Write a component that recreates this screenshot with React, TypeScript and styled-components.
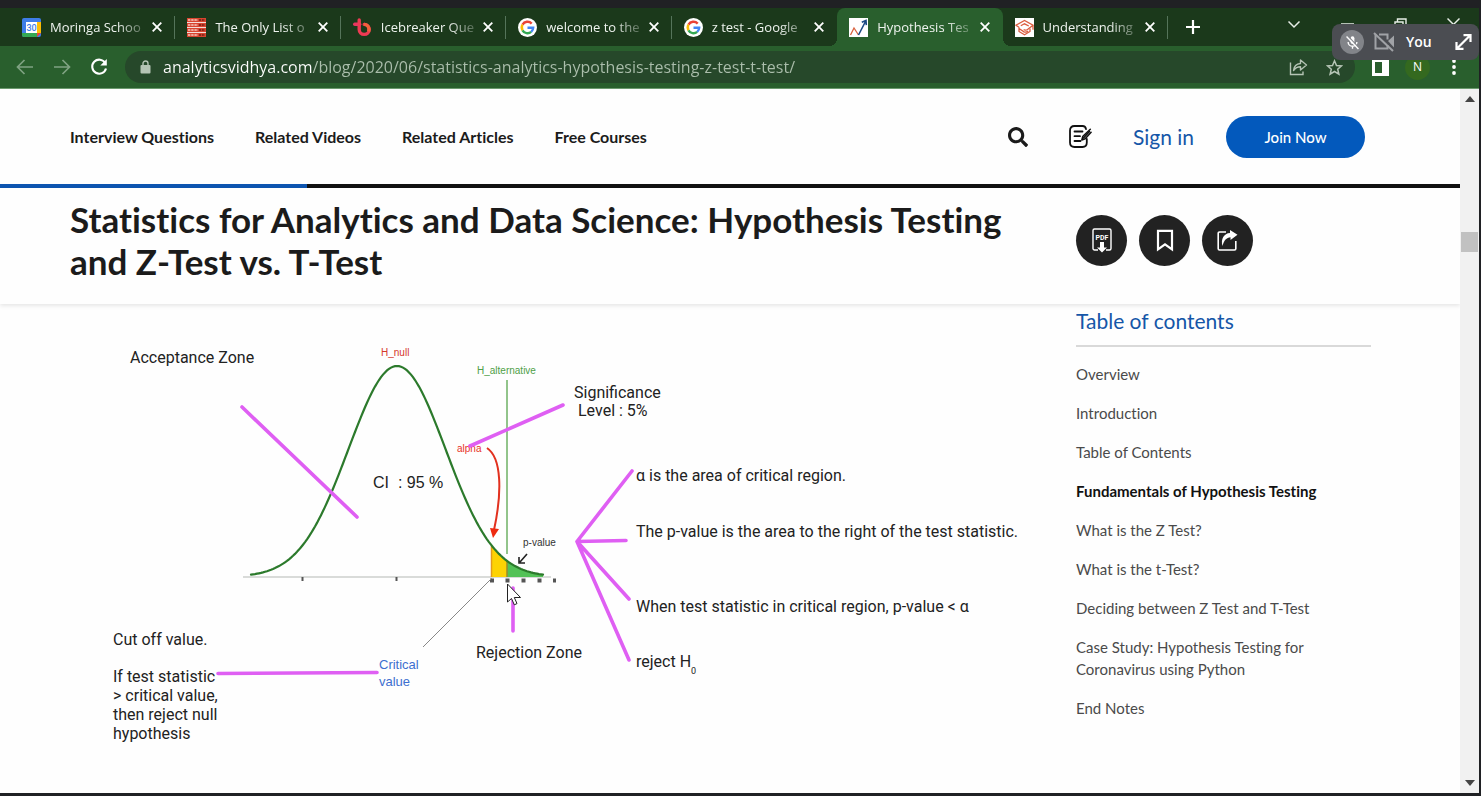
import React from "react";
import styled, { createGlobalStyle, css } from "styled-components";
import { FaSearch } from "react-icons/fa";

const chromeFont = `"Open Sans", "Noto Sans", sans-serif`;
const siteFont = `Lato, "Open Sans", sans-serif`;

const GlobalStyle = createGlobalStyle`
  *, *::before, *::after { box-sizing: border-box; font-variant-ligatures: none; }
  body { margin: 0; background: #202124; font-family: ${siteFont}; }
  button { font: inherit; color: inherit; background: none; border: 0; padding: 0; cursor: pointer; }
  a { color: inherit; text-decoration: none; }
  h1, h2, ul { margin: 0; padding: 0; }
  svg { display: block; flex: none; }
`;

/* ---------- browser window ---------- */

const Window = styled.div`
  display: flex;
  flex-direction: column;
  min-height: 100vh;
  padding: 8px 2px 3px 0;
  background: #202124;
`;

const TabStrip = styled.div`
  position: relative;
  display: flex;
  height: 38px;
  padding-left: 10px;
  background: #1b391b;
`;

const Tabs = styled.div`
  flex: 0 1 1158px;
  display: grid;
  grid-template-columns: repeat(7, minmax(0, 1fr));
`;

const Tab = styled.div<{ $active?: boolean; $divider?: boolean }>`
  position: relative;
  display: flex;
  align-items: center;
  gap: 9px;
  padding: 0 13px 0 12px;
  color: #eef3ee;
  font: 13px/20px ${chromeFont};

  ${(p) =>
    p.$divider &&
    css`
      &::after {
        content: "";
        position: absolute;
        right: 0;
        top: 8px;
        width: 1px;
        height: 23px;
        background: #55745a;
      }
    `}

  ${(p) =>
    p.$active &&
    css`
      background: #295f2d;
      border-radius: 8px 8px 0 0;
      &::before,
      &::after {
        content: "";
        position: absolute;
        bottom: 0;
        width: 8px;
        height: 8px;
      }
      &::before {
        left: -8px;
        background: radial-gradient(circle at 0 0, transparent 8px, #295f2d 8px);
      }
      &::after {
        right: -8px;
        background: radial-gradient(circle at 100% 0, transparent 8px, #295f2d 8px);
      }
    `}
`;

const TabLabel = styled.span`
  flex: 1;
  min-width: 0;
  white-space: nowrap;
  mask-image: linear-gradient(90deg, #000 72%, #0004 100%);
`;

const TabClose = styled.button`
  display: flex;
  color: #fff;
`;

const NewTab = styled.button`
  display: flex;
  align-items: center;
  margin-left: 18px;
  color: #fff;
`;

const WindowControls = styled.div`
  display: flex;
  align-items: flex-start;
  gap: 40px;
  margin-left: auto;
  padding: 9px 19px 0 0;
  color: #e8eee8;

  button { display: flex; }
`;

const Toolbar = styled.div`
  display: flex;
  align-items: center;
  height: 43px;
  padding: 0 17px 0 16px;
  background: #295f2d;
  border-bottom: 1px solid #6b9a6e;
  color: #fff;
`;

const NavButtons = styled.div`
  display: flex;
  gap: 19px;
  margin-right: 17px;
`;

const NavButton = styled.button<{ $dim?: boolean }>`
  display: flex;
  color: ${(p) => (p.$dim ? "#7fa282" : "#fff")};
`;

const AddressBar = styled.div`
  flex: 1;
  display: flex;
  align-items: center;
  gap: 12px;
  height: 32px;
  padding: 0 12px 0 15px;
  border-radius: 16px;
  background: #26482a;
  color: #b5c4b5;

  button { display: flex; }
`;

const AddressInput = styled.input`
  flex: 1;
  min-width: 0;
  border: 0;
  outline: 0;
  padding: 0;
  font: 16px/24px ${chromeFont};
  color: transparent;
  background: linear-gradient(90deg, #fff 149px, #abbeac 149px);
  background-clip: text;
`;

const AddressActions = styled.div`
  display: flex;
  align-items: center;
  gap: 18px;
`;

const ToolbarActions = styled.div`
  display: flex;
  align-items: center;
  gap: 16px;
  margin-left: 17px;

  button { display: flex; }
`;

const Avatar = styled.button`
  align-items: center;
  justify-content: center;
  width: 25px;
  height: 25px;
  border-radius: 50%;
  background: #34691f;
  font: 12px/16px ${chromeFont};
`;

const MenuButton = styled.button`
  padding: 0 6px;
`;

/* ---------- call overlay ---------- */

const CallOverlay = styled.div`
  position: absolute;
  z-index: 2;
  right: 0;
  top: 16px;
  display: flex;
  align-items: center;
  width: 147px;
  height: 36px;
  padding: 0 7px 0 8px;
  border-radius: 8px;
  background: #4b4d52;
  color: #fff;

  button { display: flex; margin-left: auto; }
`;

const MutedBadge = styled.span`
  display: flex;
  align-items: center;
  justify-content: center;
  width: 24px;
  height: 24px;
  margin-right: 9px;
  border-radius: 50%;
  background: #828489;
`;

const CallName = styled.span`
  margin-left: 11px;
  font: 600 14px/20px ${chromeFont};
`;

/* ---------- page ---------- */

const Viewport = styled.div`
  flex: 1;
  display: flex;
  background: #fefefe;
`;

const Page = styled.div`
  flex: 1;
  min-width: 0;
  color: #1b1b1b;
`;

const SiteHeader = styled.header`
  display: flex;
  align-items: center;
  justify-content: space-between;
  height: 95px;
  padding: 0 95px 0 70px;
`;

const SiteNav = styled.nav`
  display: flex;
  gap: 41px;
  font: 700 16px/24px ${siteFont};
`;

const HeaderActions = styled.div`
  display: flex;
  align-items: center;

  > button { display: flex; }
`;

const WriteLink = styled.a`
  margin-left: 41px;
`;

const SignIn = styled.a`
  margin: 0 32px 0 41px;
  color: #1556a8;
  font-size: 21px;
  line-height: 28px;
`;

const JoinButton = styled.button`
  justify-content: center;
  width: 139px;
  border-radius: 21px;
  background: #0359bc;
  color: #fff;
  font: 500 15px/42px ${siteFont};
`;

const ReadProgress = styled.div`
  height: 4px;
  background: linear-gradient(90deg, #0d55b0 21%, #111 21%);
`;

const TitleBar = styled.div`
  display: grid;
  grid-template-columns: minmax(0, 1fr) 295px;
  gap: 30px;
  align-items: center;
  padding: 10px 89px 22px 70px;
  box-shadow: 0 2px 4px #00000018;
`;

const Title = styled.h1`
  font: 700 35px/42px ${siteFont};
  font-variant-ligatures: none;
`;

const TitleActions = styled.div`
  display: flex;
  gap: 12px;
`;

const RoundButton = styled.button`
  display: flex;
  align-items: center;
  justify-content: center;
  width: 51px;
  height: 51px;
  border-radius: 50%;
  background: #222;
  color: #fff;
`;

const Columns = styled.div`
  display: grid;
  grid-template-columns: minmax(0, 1fr) 295px;
  gap: 30px;
  padding: 0 89px 0 70px;
`;

const Figure = styled.figure`
  margin: 0;

  svg { width: 100%; max-width: 976px; height: auto; }
`;

const Toc = styled.aside`
  padding-top: 3px;
`;

const TocHeading = styled.h2`
  padding-bottom: 10px;
  border-bottom: 2px solid #d9d9d9;
  color: #1556a8;
  font: 400 21px/28px ${siteFont};
`;

const TocList = styled.ul`
  display: flex;
  flex-direction: column;
  gap: 17px;
  padding-top: 16px;
  list-style: none;
  font-size: 15px;
  line-height: 22px;
  color: #4a4a4a;
`;

const TocItem = styled.li<{ $current?: boolean }>`
  ${(p) => p.$current && css`color: #111; font-weight: 700;`}
`;

/* ---------- page scrollbar ---------- */

const ScrollTrack = styled.div`
  display: flex;
  flex-direction: column;
  align-items: center;
  width: 19px;
  background: #f1f1f1;

  button { display: flex; padding: 7px 0; }
`;

const ScrollSpace = styled.div<{ $share: number }>`
  flex: ${(p) => p.$share} 0 0;
`;

const ScrollThumb = styled.div`
  width: 17px;
  height: 20px;
  background: #c1c1c1;
`;

/* ---------- icons ---------- */

const Close = () => (
  <svg width="10" height="10" viewBox="0 0 10 10" stroke="currentColor" strokeWidth="1.8">
    <path d="M.7.7l8.6 8.6M9.3.7L.7 9.3" />
  </svg>
);

const CalendarIcon = () => (
  <svg width="19" height="19" viewBox="0 0 19 19">
    <rect width="19" height="19" rx="2" fill="#3f7de8" />
    <path d="M15 4h4v11h-4z" fill="#fbbc04" />
    <path d="M0 15h15v4H2a2 2 0 0 1-2-2z" fill="#34a853" />
    <path d="M15 15h4l-4 4z" fill="#ea4335" />
    <path d="M4 4h11v11H4z" fill="#fff" />
    <text x="9.5" y="12.8" textAnchor="middle" fontFamily="Roboto, sans-serif" fontSize="9" fontWeight="500" fill="#3f7de8">30</text>
  </svg>
);

const ListIcon = () => (
  <svg width="19" height="19" viewBox="0 0 19 19">
    <rect width="19" height="19" fill="#f3ded8" />
    {[0, 5, 10, 15].map((y) => (
      <g key={y}>
        <rect y={y} width="19" height="4" fill="#d8452f" />
        <path d={`M1 ${y + 2}h10`} stroke="#f6c7bd" strokeWidth="1.4" strokeDasharray="2.4 .8" />
        <path d={`M12 ${y + 2}h6`} stroke="#6d1f17" strokeWidth="1.6" strokeDasharray="2 .8" />
      </g>
    ))}
  </svg>
);

const TeamIcon = () => (
  <svg width="19" height="19" viewBox="0 0 19 19" fill="none" strokeWidth="3.4">
    <path d="M1.700 6.200h5" stroke="#e8365f" strokeLinecap="round" />
    <path d="M6.200 2v9.400a5 5 0 1 0 5-5" stroke="#ee3a53" strokeLinecap="round" />
    <path d="M11 6.400a5 5 0 0 1 4.600 7" stroke="#f2603c" />
  </svg>
);

const GoogleIcon = () => (
  <svg width="19" height="19" viewBox="0 0 19 19">
    <circle cx="9.5" cy="9.5" r="9.5" fill="#fff" />
    <g fill="none" strokeWidth="2.4">
      <path d="M13.7 5.6A5.7 5.7 0 0 0 4.5 6.7" stroke="#ea4335" />
      <path d="M4.5 6.7a5.7 5.7 0 0 0 0 5.6" stroke="#fbbc05" />
      <path d="M4.5 12.3a5.7 5.7 0 0 0 8.7 1.5" stroke="#34a853" />
      <path d="M13.2 13.8a5.7 5.7 0 0 0 2-4.1H9.5" stroke="#4285f4" />
    </g>
  </svg>
);

const VidhyaIcon = () => (
  <svg width="19" height="19" viewBox="0 0 19 19" fill="none">
    <rect width="19" height="19" fill="#fff" />
    <path d="M1.5 17L5 10l4.5 7" stroke="#d9623f" strokeWidth="1.3" />
    <path d="M9.500 17L16.500 3.500M12.800 4.200l4.200-1.700.3 4.600" stroke="#1c4a85" strokeWidth="1.6" />
  </svg>
);

const ScholarIcon = () => (
  <svg width="19" height="19" viewBox="0 0 19 19" fill="none" stroke="#db5d3f" strokeWidth="1.3">
    <rect width="19" height="19" fill="#fff" stroke="none" />
    <path d="M4 9.300L1 7.200l8.500-4.700L18 7.200l-5.500 4.300c-1.500 1.100-3 .8-3.700-.2M18 7.200v4.500M5.800 7.800l3.700-2 4.300 2.200" />
    <path d="M4 9.300v4.200l5.500 3.300 5.500-3.300v-3M4 10.500l5 3.300c1.500.6 3 0 4-.9" />
  </svg>
);

const BackArrow = ({ flip }: { flip?: boolean }) => (
  <svg width="18" height="18" viewBox="0 0 18 18" fill="none" stroke="currentColor" strokeWidth="1.7">
    <path d={flip ? "M1 9h15M9.500 2l7 7-7 7" : "M17 9H2M8.500 2l-7 7 7 7"} />
  </svg>
);

const ReloadIcon = () => (
  <svg width="18" height="18" viewBox="0 0 18 18" fill="none" stroke="currentColor" strokeWidth="2.1">
    <path d="M15.200 5A7 7 0 1 0 16 10.500" />
    <path d="M16.800 1v6.500h-6.500z" fill="currentColor" stroke="none" />
  </svg>
);

const LockIcon = () => (
  <svg width="11" height="14" viewBox="0 0 11 14">
    <rect x=".5" y="5" width="10" height="8.500" rx="1" fill="currentColor" />
    <path d="M3 6V3.500a2.500 2.500 0 0 1 5 0V6" fill="none" stroke="currentColor" strokeWidth="1.4" />
  </svg>
);

const SharePageIcon = () => (
  <svg width="19" height="18" viewBox="0 0 19 18" fill="none" stroke="currentColor" strokeWidth="1.4">
    <path d="M1.500 4.500v12h12.500v-3" />
    <path d="M4.500 12.500c.5-4.500 3-6.700 7-7V2l6 5-6 5V8.800c-3 0-5.200 1.200-7 3.700z" strokeLinejoin="round" />
  </svg>
);

const StarIcon = () => (
  <svg width="17" height="17" viewBox="0 0 17 17" fill="none" stroke="currentColor" strokeWidth="1.5">
    <path d="M8.500 1.800l2 4.700 5 .4-3.800 3.300 1.200 5-4.400-2.700-4.400 2.700 1.200-5L1.500 6.900l5-.4z" />
  </svg>
);

const SidePanelIcon = () => (
  <svg width="17" height="17" viewBox="0 0 17 17">
    <path d="M0 0h17v17H0zM3 3v11h7V3z" fill="currentColor" fillRule="evenodd" />
  </svg>
);

const KebabIcon = () => (
  <svg width="4" height="16" viewBox="0 0 4 16" fill="currentColor">
    <circle cx="2" cy="2" r="1.900" />
    <circle cx="2" cy="8" r="1.900" />
    <circle cx="2" cy="14" r="1.900" />
  </svg>
);

const MicOffIcon = () => (
  <svg width="15" height="15" viewBox="0 0 24 24" fill="none" stroke="#fff" strokeWidth="2.200">
    <rect x="9" y="2" width="6" height="12" rx="3" fill="#fff" stroke="none" />
    <path d="M5 11a7 7 0 0 0 14 0M12 18v4" />
    <path d="M4.500 1.500l18 19" stroke="#828489" strokeWidth="2" />
    <path d="M2.500 2.500l19 20" />
  </svg>
);

const CameraOffIcon = () => (
  <svg width="22" height="20" viewBox="0 0 22 20" fill="none" stroke="#a0a2a6" strokeWidth="2">
    <path d="M6 2.500h8.500v5M14.500 13v3.500H2.500V2.500" />
    <path d="M15 9l6-5.500v12z" fill="#a0a2a6" stroke="none" />
    <path d="M1 1l19 18" />
  </svg>
);

const ExpandIcon = () => (
  <svg width="17" height="16" viewBox="0 0 17 16" fill="none" stroke="#fff" strokeWidth="2.200">
    <path d="M2 14.500L15 1.500M8.500 1.200H15.500V8M1.500 8v6.800H8.500" />
  </svg>
);

const WriteIcon = () => (
  <svg width="23" height="23" viewBox="0 0 23 23" fill="none" stroke="#111" strokeWidth="1.800" strokeLinecap="round">
    <path d="M17 4.200C16.700 2 15.500 1 13.500 1h-8C2.500 1 1 2.500 1 5.500v12C1 20.500 2.500 22 5.500 22h8c3 0 4.300-1.500 4.300-4.500V14" />
    <path d="M5.500 6.500h8M5.500 11.200h5.500M5.500 16h6" />
    <path d="M12.800 15l1-3.500 7.500-7.200M12.800 15l3.300-1.200 6-6.500" strokeWidth="1.500" />
    <path d="M14.500 13l6-6.500" strokeWidth="1.600" />
  </svg>
);

const PdfIcon = () => (
  <svg width="20" height="25" viewBox="0 0 20 25" fill="none" stroke="#fff" strokeWidth="1.400">
    <path d="M6 22H2.500A1.500 1.500 0 0 1 1 20.500V2.500A1.500 1.500 0 0 1 2.500 1h15A1.500 1.500 0 0 1 19 2.500v18a1.500 1.500 0 0 1-1.500 1.500H14" />
    <text x="10" y="11.500" textAnchor="middle" fontFamily="Roboto, sans-serif" fontSize="7" fontWeight="700" fill="#fff" stroke="none">PDF</text>
    <path d="M8 14h4v5.500h3L10 24.500 5 19.500h3z" fill="#fff" stroke="none" />
  </svg>
);

const BookmarkIcon = () => (
  <svg width="18" height="23" viewBox="0 0 18 23" fill="none" stroke="#fff" strokeWidth="2.200">
    <path d="M2 1.800h14v18.500l-7-5-7 5z" />
  </svg>
);

const ShareIcon = () => (
  <svg width="21" height="21" viewBox="0 0 21 21" fill="none" stroke="#fff" strokeWidth="1.600">
    <path d="M9 2H2.500C1.600 2 1.200 2.400 1.200 3.200v15.600c0 .8.400 1.200 1.300 1.200h15c.9 0 1.300-.4 1.300-1.200V11" />
    <path d="M13 0l7.500 4.800-7 5.200V7.300C9.500 7.500 7 10.500 5.500 16 3.500 9 7 3.300 13 3z" fill="#fff" stroke="none" />
  </svg>
);

/* ---------- hypothesis test diagram ---------- */

const MEAN = 397;
const SIGMA = 48.5;
const BASELINE = 577;
const PEAK = 211;

const curve = (from: number, to: number) => {
  const points: string[] = [];
  for (let x = from; x <= to; x += 2) {
    const y = BASELINE - PEAK * Math.exp(-((x - MEAN) ** 2) / (2 * SIGMA ** 2));
    points.push(`${x},${y.toFixed(1)}`);
  }
  return points.join(" ");
};

const Note = styled.text`
  font: 16px Roboto, sans-serif;
  fill: #222;
`;

const SmallNote = styled.text<{ $tone: string }>`
  font: 10px "Liberation Sans", sans-serif;
  fill: ${(p) => p.$tone};
`;

const IntervalNote = styled.text`
  font: 16px "Liberation Sans", sans-serif;
  fill: #222;
`;

const CriticalNote = styled.text`
  font: 13px "Liberation Sans", sans-serif;
  fill: #3d6fd0;
`;

const Diagram = () => (
  <svg viewBox="70 304 976 480" role="img" aria-label="Acceptance and rejection zones of a hypothesis test">
    <path d="M243 577H551" stroke="#b4b8b4" strokeWidth="1.200" />
    <polygon points={`491,577 ${curve(491, 507)} 507,577`} fill="#fdd303" />
    <polygon points={`507,577 ${curve(507, 543)} 543,577`} fill="#53c257" />
    <path d="M491.500 546v31" stroke="#e39a1c" strokeWidth="1.500" />
    <path d="M507 560v17" stroke="#9a8a2a" strokeWidth="1.500" />
    <path d="M507 380V554" stroke="#92c48b" strokeWidth="2" />
    <polyline points={curve(251, 543)} fill="none" stroke="#2c7a2c" strokeWidth="2.200" strokeLinecap="round" />
    <path d="M302.500 577v4M396.500 577v4" stroke="#555" strokeWidth="2" />
    <path d="M490 580.500h4M505.500 580.500h4M521.500 580.500h4M537.500 580.500h4M553 580.500h3" stroke="#555" strokeWidth="4" />
    <path d="M492 578L423 647" stroke="#888" strokeWidth="1" />

    <path d="M487 448c15 10 15 45 7 82" fill="none" stroke="#e2311f" strokeWidth="2" />
    <path d="M490 528l9 1-6 9z" fill="#ee2a10" />
    <path d="M527 554l-7 8M519 557v6h6" fill="none" stroke="#222" strokeWidth="1.600" />

    <SmallNote x="381" y="356" $tone="#d5382b">H_null</SmallNote>
    <SmallNote x="477" y="374" $tone="#4f9f48">H_alternative</SmallNote>
    <SmallNote x="457" y="452" $tone="#e8321f">alpha</SmallNote>
    <SmallNote x="523" y="546" $tone="#333">p-value</SmallNote>

    <g stroke="#df5ff3" strokeWidth="3.600" strokeLinecap="round" strokeLinejoin="round" fill="none">
      <path d="M242 407L357 517M470 446L563 405" />
      <path d="M632 471L577 541.500L626 540.500M629 599L577 541.500L629 660" />
      <path d="M513 588V631M218 673.500L377 672.500" />
    </g>

    <Note x="130" y="363">Acceptance Zone</Note>
    <IntervalNote x="373" y="488">CI&nbsp; : 95 %</IntervalNote>
    <Note x="574" y="398">Significance</Note>
    <Note x="578" y="416">Level : 5%</Note>
    <Note x="636" y="481">α is the area of critical region.</Note>
    <Note x="636" y="537">The p-value is the area to the right of the test statistic.</Note>
    <Note x="636" y="612">When test statistic in critical region, p-value &lt; α</Note>
    <Note x="636" y="667">
      reject H<tspan dy="7" fontSize="9">0</tspan>
    </Note>
    <Note x="476" y="658">Rejection Zone</Note>
    <Note x="113" y="645">Cut off value.</Note>
    <Note x="113" y="682">If test statistic</Note>
    <Note x="113" y="701">&gt; critical value,</Note>
    <Note x="113" y="720">then reject null</Note>
    <Note x="113" y="739">hypothesis</Note>
    <CriticalNote x="379" y="669">Critical</CriticalNote>
    <CriticalNote x="379" y="686">value</CriticalNote>

    <path d="M507.500 584v18l4-3.500 2.800 6.300 2.700-1.200-2.700-6.100h6.200z" fill="#fff" stroke="#222" strokeWidth="1" />
  </svg>
);

/* ---------- data ---------- */

const tabs = [
  { label: "Moringa Schoo", icon: <CalendarIcon />, divider: true },
  { label: "The Only List o", icon: <ListIcon />, divider: true },
  { label: "Icebreaker Que", icon: <TeamIcon />, divider: true },
  { label: "welcome to the", icon: <GoogleIcon />, divider: true },
  { label: "z test - Google", icon: <GoogleIcon /> },
  { label: "Hypothesis Tes", icon: <VidhyaIcon />, active: true },
  { label: "Understanding", icon: <ScholarIcon />, divider: true },
];

const navLinks = ["Interview Questions", "Related Videos", "Related Articles", "Free Courses"];

const tocItems = [
  "Overview",
  "Introduction",
  "Table of Contents",
  "Fundamentals of Hypothesis Testing",
  "What is the Z Test?",
  "What is the t-Test?",
  "Deciding between Z Test and T-Test",
  "Case Study: Hypothesis Testing for Coronavirus using Python",
  "End Notes",
];

export default function App() {
  return (
    <Window>
      <GlobalStyle />
      <TabStrip>
        <Tabs>
          {tabs.map((t) => (
            <Tab key={t.label} $active={t.active} $divider={t.divider}>
              {t.icon}
              <TabLabel>{t.label}</TabLabel>
              <TabClose aria-label={`Close ${t.label}`}><Close /></TabClose>
            </Tab>
          ))}
        </Tabs>
        <NewTab aria-label="New tab">
          <svg width="14" height="14" viewBox="0 0 14 14" stroke="currentColor" strokeWidth="2.200">
            <path d="M7 0v14M0 7h14" />
          </svg>
        </NewTab>
        <WindowControls>
          <button aria-label="Search tabs">
            <svg width="14" height="14" viewBox="0 0 14 14" fill="none" stroke="currentColor" strokeWidth="1.500">
              <path d="M1.500 4.500L7 10l5.500-5.500" />
            </svg>
          </button>
          <button aria-label="Minimize">
            <svg width="13" height="14" viewBox="0 0 13 14" stroke="currentColor" strokeWidth="1.500">
              <path d="M0 7h13" />
            </svg>
          </button>
          <button aria-label="Restore">
            <svg width="13" height="14" viewBox="0 0 13 14" fill="none" stroke="currentColor" strokeWidth="1.400">
              <path d="M1 5h8v8H1zM3.500 5V2H12v8.500H9" />
            </svg>
          </button>
          <button aria-label="Close window">
            <svg width="13" height="14" viewBox="0 0 13 14" stroke="currentColor" strokeWidth="1.500">
              <path d="M.5 1.500l12 12M12.500 1.500l-12 12" />
            </svg>
          </button>
        </WindowControls>
        <CallOverlay>
          <MutedBadge><MicOffIcon /></MutedBadge>
          <CameraOffIcon />
          <CallName>You</CallName>
          <button aria-label="Expand call"><ExpandIcon /></button>
        </CallOverlay>
      </TabStrip>

      <Toolbar>
        <NavButtons>
          <NavButton $dim aria-label="Back"><BackArrow /></NavButton>
          <NavButton $dim aria-label="Forward"><BackArrow flip /></NavButton>
          <NavButton aria-label="Reload"><ReloadIcon /></NavButton>
        </NavButtons>
        <AddressBar>
          <LockIcon />
          <AddressInput
            aria-label="Address"
            defaultValue="analyticsvidhya.com/blog/2020/06/statistics-analytics-hypothesis-testing-z-test-t-test/"
          />
          <AddressActions>
            <button aria-label="Share this page"><SharePageIcon /></button>
            <button aria-label="Bookmark this tab"><StarIcon /></button>
          </AddressActions>
        </AddressBar>
        <ToolbarActions>
          <button aria-label="Side panel"><SidePanelIcon /></button>
          <Avatar aria-label="Profile">N</Avatar>
          <MenuButton aria-label="Menu"><KebabIcon /></MenuButton>
        </ToolbarActions>
      </Toolbar>

      <Viewport>
        <Page>
          <SiteHeader>
            <SiteNav>
              {navLinks.map((label) => (
                <a key={label} href="#">{label}</a>
              ))}
            </SiteNav>
            <HeaderActions>
              <button aria-label="Search"><FaSearch size={20} /></button>
              <WriteLink href="#" aria-label="Write an article"><WriteIcon /></WriteLink>
              <SignIn href="#">Sign in</SignIn>
              <JoinButton>Join Now</JoinButton>
            </HeaderActions>
          </SiteHeader>
          <ReadProgress />
          <TitleBar>
            <Title>Statistics for Analytics and Data Science: Hypothesis Testing and Z-Test vs. T-Test</Title>
            <TitleActions>
              <RoundButton aria-label="Download PDF"><PdfIcon /></RoundButton>
              <RoundButton aria-label="Bookmark"><BookmarkIcon /></RoundButton>
              <RoundButton aria-label="Share"><ShareIcon /></RoundButton>
            </TitleActions>
          </TitleBar>
          <Columns>
            <Figure><Diagram /></Figure>
            <Toc>
              <TocHeading>Table of contents</TocHeading>
              <TocList>
                {tocItems.map((item) => (
                  <TocItem key={item} $current={item.startsWith("Fundamentals")}>
                    <a href="#">{item}</a>
                  </TocItem>
                ))}
              </TocList>
            </Toc>
          </Columns>
        </Page>
        <ScrollTrack>
          <button aria-label="Scroll up">
            <svg width="10" height="6" viewBox="0 0 10 6"><path d="M0 6l5-6 5 6z" fill="#444" /></svg>
          </button>
          <ScrollSpace $share={123} />
          <ScrollThumb />
          <ScrollSpace $share={521} />
          <button aria-label="Scroll down">
            <svg width="10" height="6" viewBox="0 0 10 6"><path d="M0 0l5 6 5-6z" fill="#444" /></svg>
          </button>
        </ScrollTrack>
      </Viewport>
    </Window>
  );
}
